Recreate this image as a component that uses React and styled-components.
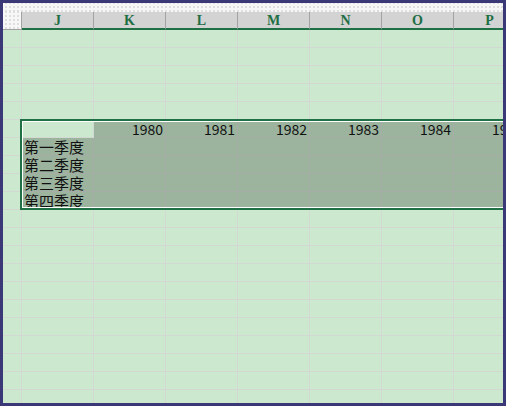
import React from "react";
import styled, { createGlobalStyle } from "styled-components";

const Global = createGlobalStyle`
  html, body { margin: 0; padding: 0; overflow: hidden; background: #3b3878; }
`;

const dots = `
  background-color: #f7f7f7;
  background-image: radial-gradient(circle, #d6d6d6 0.6px, transparent 1px);
  background-size: 4px 4px;
  background-position: 1px 2px;
`;

const Frame = styled.div`
  width: 506px;
  height: 406px;
  box-sizing: border-box;
  border: 3px solid #3b3878;
  background: #cce8cf;
  display: flex;
  flex-direction: column;
  overflow: hidden;
`;

const TopStrip = styled.div`
  height: 9px;
  flex: none;
  ${dots}
`;

const HeaderRow = styled.div`
  display: flex;
  height: 18px;
  flex: none;
`;

const Corner = styled.div`
  width: 19px;
  flex: none;
  box-sizing: border-box;
  border-right: 1px solid #a3a3a3;
  border-bottom: 1px solid #a3a3a3;
  ${dots}
`;

const ColHead = styled.div`
  width: 72px;
  flex: none;
  box-sizing: border-box;
  background: #d3d3d3;
  border-right: 1px solid #a3a3a3;
  border-bottom: 2px solid #1f7145;
  display: flex;
  align-items: center;
  justify-content: center;
  font-family: "Liberation Serif", serif;
  font-weight: bold;
  font-size: 14px;
  color: #1f6e43;
  padding-top: 1px;
`;

const Sheet = styled.div`
  position: relative;
  flex: 1;
  overflow: hidden;
`;

const Row = styled.div`
  display: flex;
  height: 18px;
`;

const Cell = styled.div`
  width: ${(p) => (p.$narrow ? 19 : 72)}px;
  flex: none;
  box-sizing: border-box;
  border-right: 1px solid ${(p) => (p.$sel ? "#a6aca6" : "#d3d8d3")};
  border-bottom: 1px solid ${(p) => (p.$sel ? "#a6aca6" : "#d3d8d3")};
  background: ${(p) => (p.$sel ? "#9cb49e" : "transparent")};
  display: flex;
  align-items: center;
  justify-content: ${(p) => (p.$right ? "flex-end" : "flex-start")};
  padding: ${(p) => (p.$right ? "1px 2px 0 0" : "0 0 0 2px")};
  color: #111;
  white-space: nowrap;
  overflow: visible;
`;

const Label = styled.span`
  font-family: "Noto Sans CJK SC", sans-serif;
  font-size: 15px;
  line-height: 15px;
`;

const Year = styled.span`
  font-family: "Noto Sans CJK SC", sans-serif;
  font-size: 14px;
  line-height: 15px;
`;

const Selection = styled.div`
  position: absolute;
  left: 17px;
  top: 89px;
  width: 560px;
  height: 91px;
  box-sizing: border-box;
  border: 2px solid #1f7145;
  box-shadow: inset 0 0 0 1px #ffffff;
  pointer-events: none;
`;

const cols = ["J", "K", "L", "M", "N", "O", "P"];
const labels = ["第一季度", "第二季度", "第三季度", "第四季度"];
const years = ["1980", "1981", "1982", "1983", "1984", "1985"];

export default function App() {
  const rows = Array.from({ length: 21 }, (_, r) => r);
  return (
    <>
      <Global />
      <Frame>
        <TopStrip />
        <HeaderRow>
          <Corner />
          {cols.map((c) => (
            <ColHead key={c}>{c}</ColHead>
          ))}
        </HeaderRow>
        <Sheet>
          {rows.map((r) => (
            <Row key={r}>
              <Cell $narrow />
              {cols.map((c, ci) => {
                const inTable = r >= 5 && r <= 9;
                const active = r === 5 && ci === 0;
                const sel = inTable && !active;
                let content = null;
                let right = false;
                if (r === 5 && ci >= 1) {
                  content = <Year>{years[ci - 1]}</Year>;
                  right = true;
                } else if (r >= 6 && r <= 9 && ci === 0) {
                  content = <Label>{labels[r - 6]}</Label>;
                }
                return (
                  <Cell key={c} $sel={sel} $right={right}>
                    {content}
                  </Cell>
                );
              })}
            </Row>
          ))}
          <Selection />
        </Sheet>
      </Frame>
    </>
  );
}
